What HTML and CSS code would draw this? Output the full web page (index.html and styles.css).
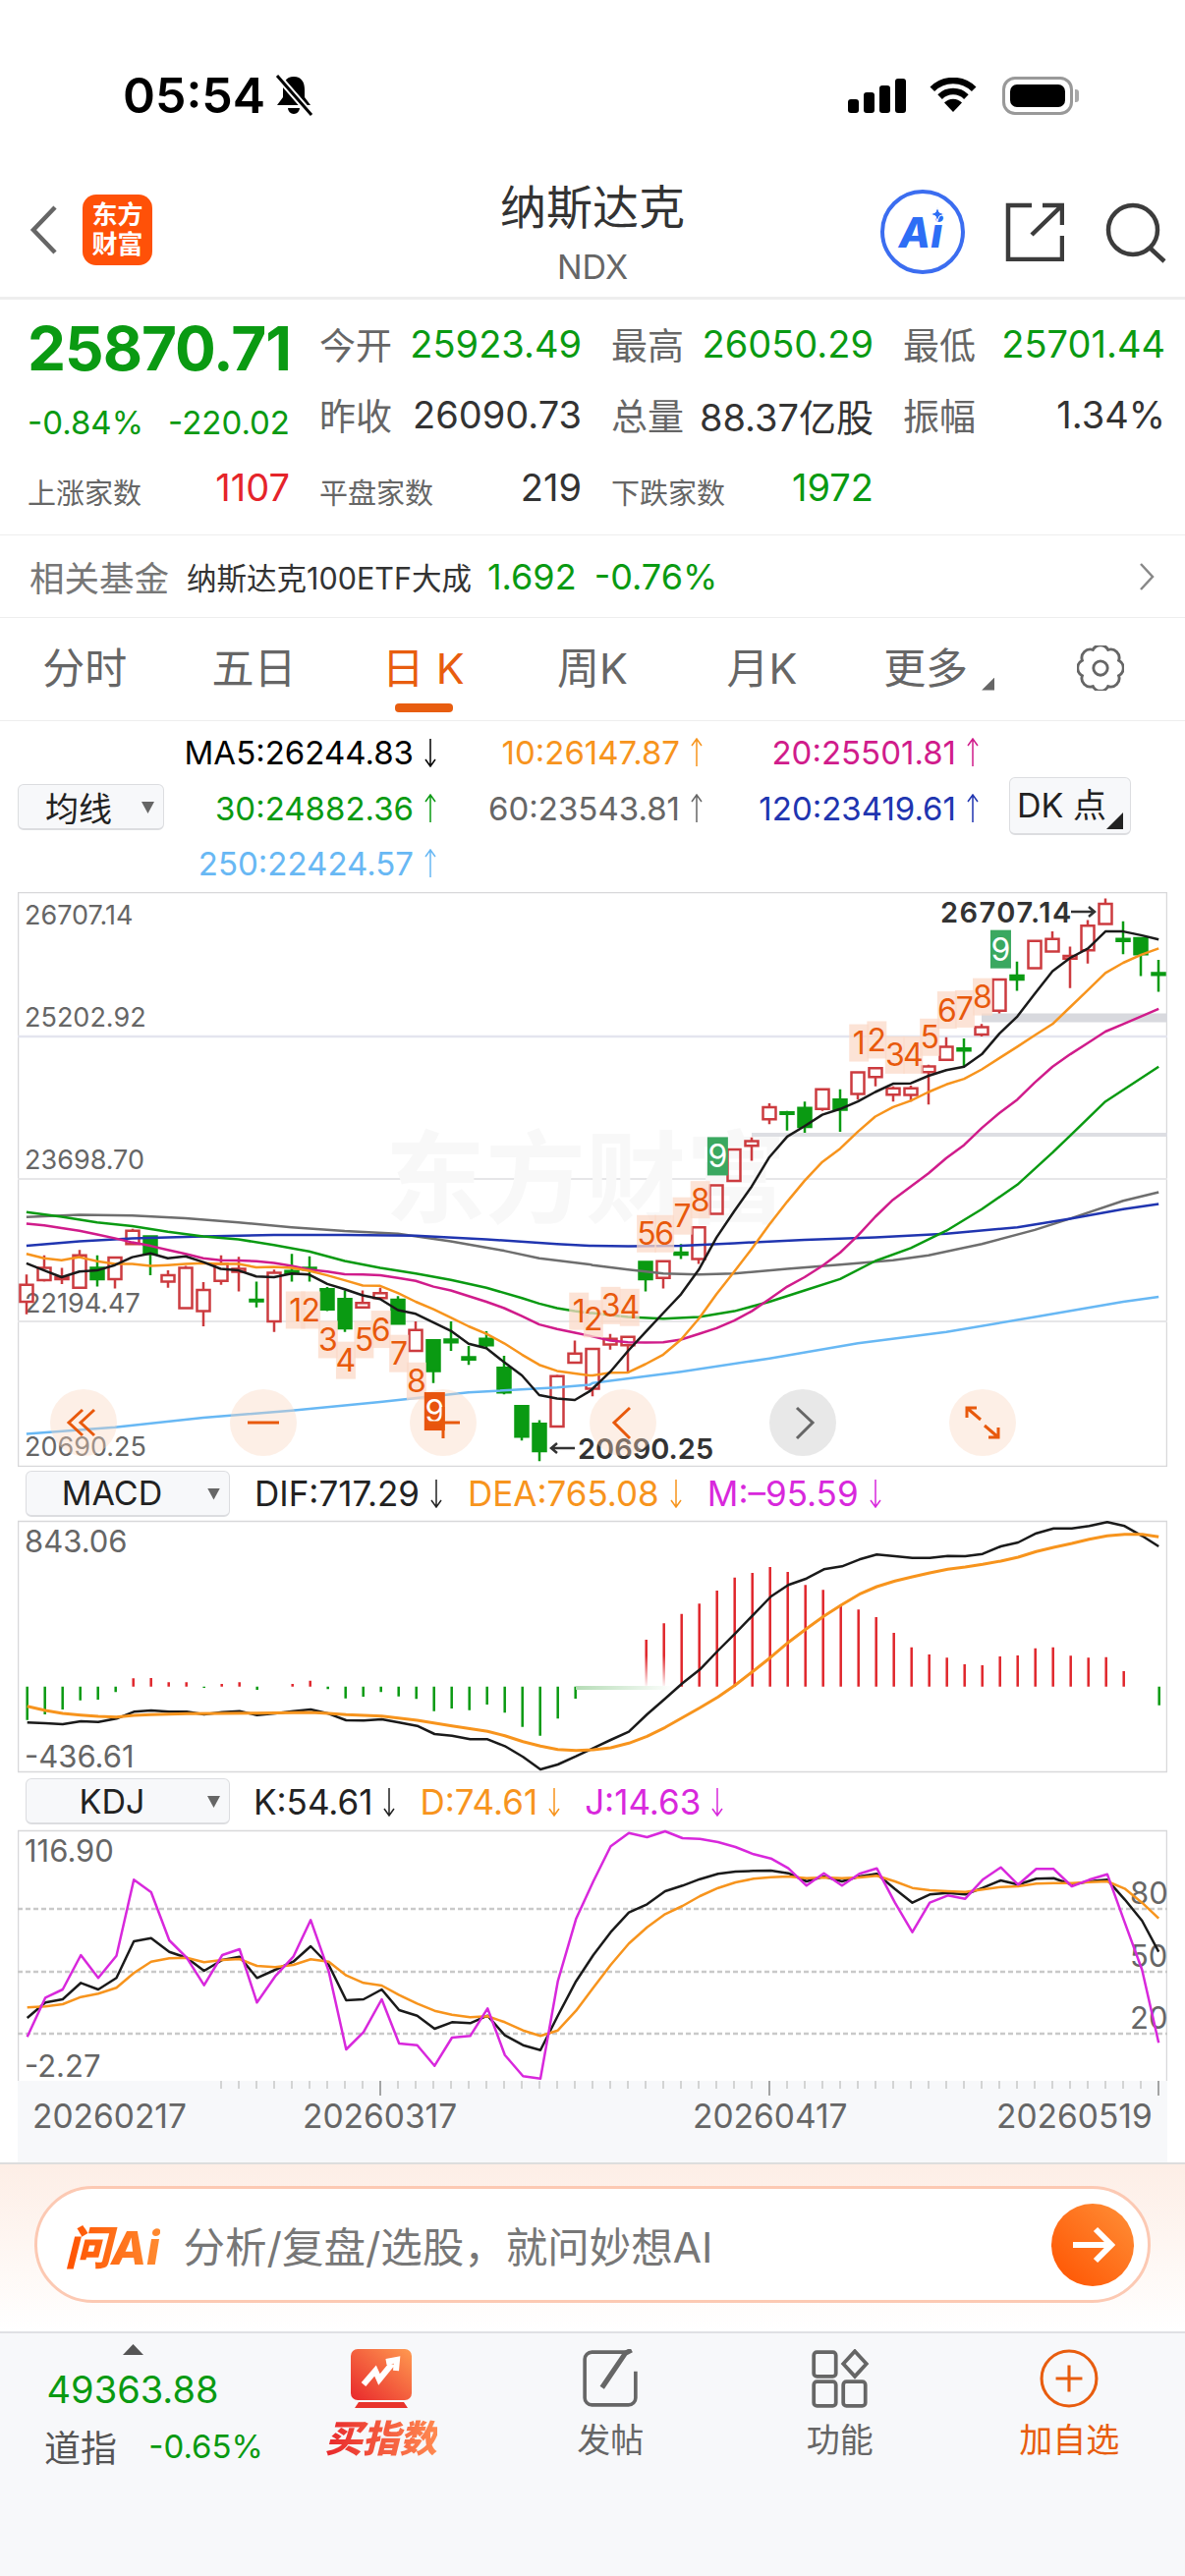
FILE: index.html
```html
<!DOCTYPE html>
<html lang="zh-CN">
<head>
  <meta charset="UTF-8">
  <meta name="viewport" content="width=device-width, initial-scale=1.0">
  <title>纳斯达克 NDX</title>
  <link rel="stylesheet" href="styles.css">
</head>
<body>

  <svg class="defs" aria-hidden="true">
    <symbol id="arr-down" viewBox="0 0 14 30"><path d="M7 1V29M2 22L7 29L12 22"/></symbol>
    <symbol id="arr-up" viewBox="0 0 14 30"><path d="M7 29V1M2 8L7 1L12 8"/></symbol>
    <linearGradient id="buy-grad" x1="0" y1="1" x2="1" y2="0">
      <stop offset="0" stop-color="#e8282c"/><stop offset="1" stop-color="#ff9a50"/>
    </linearGradient>
    <linearGradient id="go-grad" x1="0" y1="1" x2="1" y2="0">
      <stop offset="0" stop-color="#ff5200"/><stop offset="1" stop-color="#ff9038"/>
    </linearGradient>
    <linearGradient id="smear-grad" x1="0" y1="0" x2="1" y2="0">
      <stop offset="0" stop-color="#b5dcb6"/><stop offset="1" stop-color="#fff"/>
    </linearGradient>
    <linearGradient id="fade-grad" x1="0" y1="0" x2="0" y2="1">
      <stop offset="0" stop-color="#fff" stop-opacity="0"/><stop offset="1" stop-color="#fff"/>
    </linearGradient>
  </svg>

  <!-- status bar -->
  <div class="status">
    <div class="status-left">
      <span class="time">05:54</span>
      <svg class="bell" viewBox="0 0 40 42">
        <path d="M20 2c-8 0-11 6-11 13v8l-6 8h34l-6-8v-8c0-7-3-13-11-13zM14 34a6 6 0 0 0 12 0z"/>
        <path class="bell-cut" d="M4 2L37 40"/>
        <path class="bell-slash" d="M3 1L38 41"/>
      </svg>
    </div>
    <div class="status-right">
      <div class="signal"><i class="s1"></i><i class="s2"></i><i class="s3"></i><i class="s4"></i></div>
      <svg class="wifi" viewBox="0 0 50 36">
        <path class="wifi-arc" d="M3.8 11.8A30 30 0 0 1 46.2 11.8M11.6 19.6A19 19 0 0 1 38.4 19.6"/>
        <path d="M25 35L16 25.500a12.500 12.500 0 0 1 18 0z"/>
      </svg>
      <div class="battery"><i></i></div>
      <i class="battery-cap"></i>
    </div>
  </div>

  <!-- title -->
  <header class="head">
    <div class="head-left">
      <svg class="back" viewBox="0 0 30 52"><path d="M26 3L4 26L26 49"/></svg>
      <div class="logo"><span>东方</span><span>财富</span></div>
    </div>
    <div class="head-title">
      <div class="name">纳斯达克</div>
      <div class="code">NDX</div>
    </div>
    <div class="head-right">
      <svg class="ai" viewBox="0 0 88 88">
        <circle cx="44" cy="44" r="41"/>
        <text x="42" y="60">Ai</text>
        <path d="M59 19l2 5 5 2-5 2-2 5-2-5-5-2 5-2z"/>
      </svg>
      <svg class="tool share" viewBox="0 0 60 60"><path d="M27 3H3V58H58V34M27 33L58 3M38 3H58V23"/></svg>
      <svg class="tool search" viewBox="0 0 64 64"><circle cx="28" cy="30" r="25"/><path d="M46 49L60 62"/></svg>
    </div>
  </header>

  <!-- quote -->
  <section class="quote">
    <div class="q-price green">25870.71</div>
    <div class="q-cell"><span class="q-label">今开</span><span class="q-val green">25923.49</span></div>
    <div class="q-cell"><span class="q-label">最高</span><span class="q-val green">26050.29</span></div>
    <div class="q-cell"><span class="q-label">最低</span><span class="q-val green">25701.44</span></div>

    <div class="q-cell q-change green"><span>-0.84%</span><span>-220.02</span></div>
    <div class="q-cell"><span class="q-label">昨收</span><span class="q-val">26090.73</span></div>
    <div class="q-cell"><span class="q-label">总量</span><span class="q-val">88.37亿股</span></div>
    <div class="q-cell"><span class="q-label">振幅</span><span class="q-val">1.34%</span></div>

    <div class="q-cell q-count"><span class="q-small">上涨家数</span><span class="q-val red">1107</span></div>
    <div class="q-cell q-count"><span class="q-small">平盘家数</span><span class="q-val">219</span></div>
    <div class="q-cell q-count"><span class="q-small">下跌家数</span><span class="q-val green">1972</span></div>
  </section>

  <div class="fund">
    <span class="fund-label">相关基金</span>
    <span class="fund-name">纳斯达克100ETF大成</span>
    <span class="fund-val green">1.692</span>
    <span class="fund-val fund-pct green">-0.76%</span>
    <svg class="fund-more" viewBox="0 0 16 30"><path d="M2 2L14 15L2 28"/></svg>
  </div>

  <!-- period tabs -->
  <nav class="tabs">
    <div class="tab">分时</div>
    <div class="tab">五日</div>
    <div class="tab on">日 K</div>
    <div class="tab">周K</div>
    <div class="tab">月K</div>
    <div class="tab">更多<i class="tab-corner"></i></div>
    <div class="tab">
      <svg class="gear" viewBox="0 0 48 48">
        <path d="M32 4.600A9 9 0 0 1 43.400 16A9 9 0 0 1 43.400 32A9 9 0 0 1 32 43.400A9 9 0 0 1 16 43.400A9 9 0 0 1 4.600 32A9 9 0 0 1 4.600 16A9 9 0 0 1 16 4.600A9 9 0 0 1 32 4.600Z"/>
        <circle cx="24" cy="24" r="7.500"/>
      </svg>
    </div>
  </nav>

  <!-- moving averages legend -->
  <div class="legend">
    <div class="pick pick-ma">均线<i class="pick-tri"></i></div>
    <div class="ma-grid">
      <span class="ma c-black">MA5:26244.83<svg class="arr"><use href="#arr-down"/></svg></span>
      <span class="ma c-orange">10:26147.87<svg class="arr"><use href="#arr-up"/></svg></span>
      <span class="ma c-pink">20:25501.81<svg class="arr"><use href="#arr-up"/></svg></span>
      <span class="ma c-green">30:24882.36<svg class="arr"><use href="#arr-up"/></svg></span>
      <span class="ma c-gray">60:23543.81<svg class="arr"><use href="#arr-up"/></svg></span>
      <span class="ma c-blue">120:23419.61<svg class="arr"><use href="#arr-up"/></svg></span>
      <span class="ma c-sky">250:22424.57<svg class="arr"><use href="#arr-up"/></svg></span>
    </div>
    <div class="dk">DK 点<i class="dk-corner"></i></div>
  </div>

  <!-- candle chart, drawn in page coordinates -->
  <svg class="plot plot-main" viewBox="18 908 1170 585">
    <rect class="frame" x="18.500" y="908.500" width="1169" height="584"/>
    <path class="grid-a" d="M18 1055H1188"/>
    <path class="grid-b" d="M18 1200H1188M18 1345H1188"/>
    <path class="grid-c" d="M999 1036H1188"/>
    <path class="grid-d" d="M765 1155H1188"/>
    <text class="wm" x="392" y="1200">东方财富</text>
    <text class="axis" x="25" y="931">26707.14</text>
    <text class="axis" x="25" y="1035">25202.92</text>
    <text class="axis" x="25" y="1180">23698.70</text>
    <text class="axis" x="25" y="1326">22194.47</text>
    <text class="axis" x="25" y="1472">20690.25</text>
    <g id="candles"></g>
    <g id="ma-lines"></g>
    <g id="td-marks"></g>
    <text class="peak peak-top" x="957" y="928">26707.14</text>
    <path class="peak-arrow" d="M1090 928H1114M1108 923L1114 928L1108 933"/>
    <path class="peak-arrow" d="M585 1474H561M567 1469L561 1474L567 1479"/>
    <text class="peak" x="588" y="1474">20690.25</text>
    <g class="pad">
      <circle cx="85" cy="1448" r="34"/><circle cx="268" cy="1448" r="34"/><circle cx="451" cy="1448" r="34"/>
      <circle cx="634" cy="1448" r="34"/><circle cx="1000" cy="1448" r="34"/>
      <circle class="pad-off" cx="817" cy="1448" r="34"/>
    </g>
    <g id="td-top"></g>
    <g class="pad">
      <path d="M84 1435L70 1448L84 1461M96 1435L82 1448L96 1461"/>
      <path d="M252 1448H284"/>
      <path d="M435 1448H468M451 1432V1464"/>
      <path d="M641 1433L625 1448L641 1464"/>
      <path class="pad-dark" d="M811 1433L827 1448L811 1464"/>
      <path d="M984 1433L998 1445M984 1443V1433H994M1016 1463L1002 1451M1016 1453V1463H1006"/>
    </g>
  </svg>

  <div class="sub-row">
    <div class="pick pick-sub">MACD<i class="pick-tri"></i></div>
    <span class="ma c-dark">DIF:717.29<svg class="arr"><use href="#arr-down"/></svg></span>
    <span class="ma c-orange">DEA:765.08<svg class="arr"><use href="#arr-down"/></svg></span>
    <span class="ma c-violet">M:–95.59<svg class="arr"><use href="#arr-down"/></svg></span>
  </div>
  <svg class="plot plot-macd" viewBox="18 1547 1170 258">
    <rect class="frame" x="18.500" y="1548.500" width="1169" height="255"/>
    <text class="axis axis-big" x="25" y="1568">843.06</text>
    <text class="axis axis-big" x="25" y="1787">-436.61</text>
    <g id="macd-bars"></g>
    <rect x="652" y="1685" width="34" height="33" fill="url(#fade-grad)"/>
    <rect x="586" y="1716" width="100" height="4" fill="url(#smear-grad)"/>
    <g id="macd-lines"></g>
  </svg>

  <div class="sub-row sub-kdj">
    <div class="pick pick-sub">KDJ<i class="pick-tri"></i></div>
    <span class="ma c-dark">K:54.61<svg class="arr"><use href="#arr-down"/></svg></span>
    <span class="ma c-orange">D:74.61<svg class="arr"><use href="#arr-down"/></svg></span>
    <span class="ma c-violet">J:14.63<svg class="arr"><use href="#arr-down"/></svg></span>
  </div>
  <svg class="plot plot-kdj" viewBox="18 1862 1170 339">
    <rect class="strip" x="18" y="2118" width="1170" height="83"/>
    <path class="frame-open" d="M18.500 2118V1863.500H1187.500V2118"/>
    <path class="dash" d="M18 1943H1188M18 2007H1188M18 2070H1188"/>
    <text class="axis axis-big" x="25" y="1883">116.90</text>
    <text class="axis axis-big" x="25" y="2102">-2.27</text>
    <text class="axis axis-big" x="1150" y="1926">80</text>
    <text class="axis axis-big" x="1150" y="1990">50</text>
    <text class="axis axis-big" x="1150" y="2053">20</text>
    <g id="kdj-lines"></g>
    <g id="kdj-ticks"></g>
    <text class="date" x="33" y="2154">20260217</text>
    <text class="date" x="308" y="2154">20260317</text>
    <text class="date" x="705" y="2154">20260417</text>
    <text class="date" x="1014" y="2154">20260519</text>
  </svg>

  <!-- ask AI bar -->
  <div class="ask">
    <div class="ask-pill">
      <span class="ask-logo">问Ai</span>
      <span class="ask-text">分析/复盘/选股，就问妙想AI</span>
      <svg class="ask-go" viewBox="0 0 84 84">
        <circle cx="42" cy="42" r="42"/>
        <path d="M22 42H60M45 26L61 42L45 58"/>
      </svg>
    </div>
  </div>

  <!-- bottom bar -->
  <footer class="bar">
    <div class="bar-index">
      <i class="up-tri"></i>
      <div class="idx-num green">49363.88</div>
      <div class="idx-row"><span class="idx-name">道指</span><span class="idx-pct green">-0.65%</span></div>
    </div>
    <div class="bar-item">
      <svg class="bar-icon" viewBox="0 0 62 60">
        <rect width="62" height="52" rx="7" fill="url(#buy-grad)"/>
        <path d="M8 54H54L58 60H4Z" fill="#e8342c"/>
        <path class="buy-mark" d="M13 36L25 22L29 31L42 15M36 13L47 11L46 22"/>
      </svg>
      <span class="bar-label bar-buy">买指数</span>
    </div>
    <div class="bar-item">
      <svg class="bar-icon bar-line" viewBox="0 0 56 58">
        <path d="M44 3H10a7 7 0 0 0-7 7V48a7 7 0 0 0 7 7H46a7 7 0 0 0 7-7V22"/>
        <path d="M20 38L43 4L49 1" class="pen"/>
      </svg>
      <span class="bar-label">发帖</span>
    </div>
    <div class="bar-item">
      <svg class="bar-icon bar-line" viewBox="0 0 56 56">
        <rect x="3" y="3" width="21" height="23" rx="3"/>
        <rect x="3" y="31" width="21" height="23" rx="3"/>
        <rect x="31" y="31" width="21" height="23" rx="3"/>
        <path d="M42 2L53 14L42 26L31 14Z"/>
      </svg>
      <span class="bar-label">功能</span>
    </div>
    <div class="bar-item">
      <svg class="bar-icon bar-add" viewBox="0 0 58 58">
        <circle cx="29" cy="29" r="27"/>
        <path d="M16 29H42M29 16V42"/>
      </svg>
      <span class="bar-label c-active">加自选</span>
    </div>
  </footer>

  <script src="chart.js"></script>
</body>
</html>
```

FILE: styles.css
```css
* { box-sizing: border-box; }

html, body { margin: 0; padding: 0; }

body {
  width: 1206px;
  height: 2622px;
  overflow: hidden;
  background: #fff;
  color: #333;
  font-family: Inter, "Noto Sans CJK SC", sans-serif;
}

i { display: block; font-style: normal; }

.defs { width: 0; height: 0; position: absolute; }

.green { color: #0a9a12; }
.red { color: #e5242a; }
.c-black { color: #000; }
.c-dark { color: #222; }
.c-orange { color: #f7941d; }
.c-pink { color: #d01c8b; }
.c-green { color: #0a9a12; }
.c-gray { color: #666; }
.c-blue { color: #2035b0; }
.c-sky { color: #68b8f4; }
.c-violet { color: #d828dc; }
.c-active { color: #e85d0f; }

/* status bar */
.status {
  height: 175px;
  padding: 72px 108px 0 125px;
  display: flex;
  justify-content: space-between;
  align-items: flex-start;
}
.status-left, .status-right { height: 50px; display: flex; align-items: center; }
.time { font-size: 50px; font-weight: 600; color: #000; line-height: 50px; }
.bell { width: 40px; height: 42px; margin-left: 9px; }
.bell-cut { stroke: #fff; stroke-width: 7; fill: none; }
.bell-slash { stroke: #000; stroke-width: 3; fill: none; }
.signal { display: flex; align-items: flex-end; gap: 5px; height: 35px; }
.signal i { width: 11px; background: #000; border-radius: 3px; }
.s1 { height: 14px; }
.s2 { height: 21px; }
.s3 { height: 28px; }
.s4 { height: 35px; }
.wifi { width: 50px; height: 36px; margin-left: 23px; }
.wifi-arc { fill: none; stroke: #000; stroke-width: 6.500; }
.battery {
  width: 72px;
  height: 39px;
  margin-left: 25px;
  padding: 5px;
  border: 3px solid #999;
  border-radius: 13px;
}
.battery i { height: 100%; background: #000; border-radius: 7px; }
.battery-cap { width: 4px; height: 13px; margin-left: 2px; background: #aaa; border-radius: 0 3px 3px 0; }

/* title */
.head {
  height: 130px;
  border-bottom: 3px solid #eee;
  display: grid;
  grid-template-columns: 1fr auto 1fr;
  align-items: start;
}
.head-left { display: flex; align-items: center; padding: 23px 0 0 30px; }
.back { width: 30px; height: 52px; fill: none; stroke: #666; stroke-width: 4.500; }
.logo {
  width: 71px;
  height: 72px;
  margin-left: 24px;
  background: #ff5108;
  border-radius: 14px;
  color: #fff;
  font-size: 26px;
  font-weight: 700;
  line-height: 30px;
  padding-top: 6px;
  text-align: center;
}
.logo span { display: block; }
.head-title { padding-top: 6px; text-align: center; }
.name { font-size: 47px; line-height: 60px; color: #333; }
.code { font-size: 34px; line-height: 61px; color: #666; }
.head-right { display: flex; align-items: center; justify-content: flex-end; padding: 17px 17px 0 0; }
.ai { width: 88px; height: 88px; }
.ai circle { fill: none; stroke: #3b6df0; stroke-width: 4; }
.ai text { fill: #2d6ef5; font-size: 42px; font-weight: 800; font-style: italic; text-anchor: middle; }
.ai path { fill: #2d6ef5; stroke: #fff; stroke-width: 1; }
.tool { fill: none; stroke: #3c3c3c; stroke-width: 4.500; }
.share { width: 60px; height: 60px; margin-left: 40px; }
.search { width: 64px; height: 64px; margin-left: 42px; }

/* quote */
.quote {
  height: 240px;
  padding: 9px 20px 0 28px;
  border-bottom: 1px solid #eee;
  display: grid;
  grid-template-columns: 267px 267px 267px 267px;
  grid-template-rows: 72px 72px 76px;
  column-gap: 30px;
  align-items: center;
}
.q-price { font-size: 62px; font-weight: 700; letter-spacing: -1px; padding: 8px 0 0 0; white-space: nowrap; }
.q-cell { display: flex; justify-content: space-between; align-items: center; }
.q-label { font-size: 37px; color: #666; }
.q-val { font-size: 38px; }
.q-change { font-size: 33px; padding-top: 16px; }
.q-small { font-size: 29px; color: #666; padding-top: 8px; }

.fund {
  height: 84px;
  padding: 0 31px 0 30px;
  border-bottom: 1px solid #eee;
  display: flex;
  align-items: center;
}
.fund-label { font-size: 35.500px; color: #777; }
.fund-name { font-size: 30.500px; color: #333; margin-left: 18px; }
.fund-val { font-size: 36px; margin-left: 16px; }
.fund-pct { margin-left: 18px; }
.fund-more { width: 16px; height: 30px; margin-left: auto; fill: none; stroke: #888; stroke-width: 2.500; }

/* tabs */
.tabs {
  height: 105px;
  padding-top: 21px;
  border-bottom: 1px solid #eee;
  display: grid;
  grid-template-columns: repeat(7, 172.300px);
}
.tab {
  height: 60px;
  font-size: 43px;
  line-height: 60px;
  color: #666;
  display: flex;
  justify-content: center;
  align-items: center;
}
.tab.on { color: #e85d0f; position: relative; }
.tab.on::after {
  content: "";
  position: absolute;
  left: 57px;
  top: 66px;
  width: 59px;
  height: 9px;
  background: #e85d0f;
  border-radius: 4px;
}
.tab-corner {
  width: 13px;
  height: 13px;
  margin: 32px -16px 0 14px;
  background: #666;
  clip-path: polygon(100% 0, 100% 100%, 0 100%);
}
.gear { width: 48px; height: 46px; fill: none; stroke: #666; stroke-width: 3; }

/* legend */
.legend {
  height: 174px;
  padding: 3px 0 0 18px;
  display: flex;
  align-items: center;
}
.pick {
  position: relative;
  background: #f7f8fa;
  border: 1px solid #dcdde0;
  border-bottom-width: 2px;
  border-radius: 6px;
  color: #222;
  font-size: 34px;
  display: flex;
  align-items: center;
}
.pick-ma { width: 149px; height: 47px; padding-left: 27px; margin-top: -2px; }
.pick-sub { width: 208px; height: 47px; padding-right: 32px; margin-left: 26px; justify-content: center; }
.pick-tri {
  position: absolute;
  right: 9px;
  top: 17px;
  width: 13px;
  height: 12px;
  background: #666;
  clip-path: polygon(0 0, 100% 0, 50% 100%);
}
.ma-grid {
  width: 830px;
  display: grid;
  grid-template-columns: 278px 271px 281px;
  grid-auto-rows: 56.500px;
}
.ma {
  font-size: 33px;
  display: inline-flex;
  align-items: center;
  justify-content: flex-end;
}
.arr { width: 14px; height: 30px; margin-left: 10px; fill: none; stroke: currentColor; stroke-width: 1.500; }
.dk {
  position: relative;
  width: 124px;
  height: 59px;
  margin-left: 30px;
  margin-top: -4px;
  background: #f7f8fa;
  border: 1px solid #dcdde0;
  border-bottom-width: 2px;
  border-radius: 6px;
  font-size: 34px;
  color: #222;
  padding-left: 7px;
  line-height: 56px;
  white-space: nowrap;
}
.dk-corner {
  position: absolute;
  right: 7px;
  bottom: 4px;
  width: 17px;
  height: 17px;
  background: #222;
  clip-path: polygon(100% 0, 100% 100%, 0 100%);
}

/* charts */
.plot { display: block; width: 1170px; margin-left: 18px; }
.plot-main { height: 585px; }
.plot-macd { height: 258px; }
.plot-kdj { height: 339px; }
.frame { fill: none; stroke: #d8d8da; stroke-width: 1.500; }
.frame-open { fill: none; stroke: #d8d8da; stroke-width: 1.500; }
.strip { fill: #f7f8fa; }
.grid-a { stroke: #e4e5ef; stroke-width: 2.500; }
.grid-b { stroke: #e6e6e8; stroke-width: 2; }
.grid-c { stroke: #d8d9de; stroke-width: 9; }
.grid-d { stroke: #dddee3; stroke-width: 4; }
.wm { font-size: 102px; font-weight: 700; fill: #f8f8f8; dominant-baseline: central; }
.axis { font-size: 27px; fill: #666; dominant-baseline: central; }
.axis-big { font-size: 31px; }
.date { font-size: 33.500px; fill: #666; dominant-baseline: central; }
.peak { font-size: 29px; font-weight: 600; fill: #333; dominant-baseline: central; }
.peak-top { letter-spacing: 1.500px; }
.peak-arrow { fill: none; stroke: #333; stroke-width: 2.500; }
.candle-up { fill: none; stroke: #cc3b3f; stroke-width: 2.500; }
.candle-down { fill: #0a9a12; stroke: #0a9a12; stroke-width: 2.500; }
.line { fill: none; stroke-width: 2.500; stroke-linejoin: round; }
.line-wide { stroke-width: 3; }
.l-black { stroke: #1a1a1a; }
.l-orange { stroke: #f7941d; }
.l-pink { stroke: #d01c8b; }
.l-green { stroke: #0a9a12; }
.l-gray { stroke: #6e6e6e; }
.l-blue { stroke: #2035b0; }
.l-sky { stroke: #68b8f4; }
.l-violet { stroke: #d828dc; }
.td-box { fill: #fbd9c8; opacity: .75; }
.td-num { font-size: 32px; fill: #e8590c; text-anchor: middle; dominant-baseline: central; }
.td-box-red { fill: #e8540e; }
.td-box-green { fill: #3aa860; }
.td-num-white { fill: #fff; }
.pad circle { fill: #fbd4bc; opacity: .38; }
.pad circle.pad-off { fill: #e2e2e2; opacity: .8; }
.pad path { fill: none; stroke: #e8590c; stroke-width: 3; }
.pad path.pad-dark { stroke: #666; }
.bar-red { stroke: #e0262c; stroke-width: 2.500; }
.bar-green { stroke: #0a9a12; stroke-width: 2.500; }
.dash { fill: none; stroke: #c9c9c9; stroke-width: 2.500; stroke-dasharray: 5 3; }
.tick { stroke: #c8c8c8; stroke-width: 1.500; }
.tick-major { stroke: #888; stroke-width: 1.500; }

.sub-row { height: 54px; display: flex; align-items: center; gap: 25px; }
.sub-row .ma { font-size: 35px; }
.sub-kdj { height: 57px; gap: 24px; }

/* ask AI */
.ask {
  height: 172px;
  padding: 22px 35px 0;
  border-top: 2px solid #ddd;
  background: linear-gradient(#fdeee6, #fff);
}
.ask-pill {
  height: 119px;
  padding: 0 14px 0 28px;
  background: #fff;
  border: 3px solid #fcc9b3;
  border-radius: 60px;
  display: flex;
  align-items: center;
}
.ask-logo {
  font-size: 47px;
  font-weight: 800;
  font-style: italic;
  color: #ff5a0a;
  background: linear-gradient(90deg, #ff5200, #ff8a30);
  -webkit-background-clip: text;
  background-clip: text;
  -webkit-text-fill-color: transparent;
}
.ask-text { font-size: 42.500px; color: #777; margin-left: 24px; }
.ask-go { width: 84px; height: 84px; margin-left: auto; }
.ask-go circle { fill: url(#go-grad); }
.ask-go path { fill: none; stroke: #fff; stroke-width: 6; }

/* bottom bar */
.bar {
  height: 249px;
  padding-left: 45px;
  background: #f7f8fa;
  border-top: 2px solid #dfe0e4;
  display: grid;
  grid-template-columns: 226px repeat(4, 233.500px);
  align-items: start;
}
.bar-index { padding-top: 11px; }
.up-tri {
  width: 21px;
  height: 11px;
  margin-left: 80px;
  background: #555;
  clip-path: polygon(50% 0, 100% 100%, 0 100%);
}
.idx-num { width: 180px; font-size: 38px; line-height: 50px; margin-top: 10px; text-align: center; }
.idx-row { display: flex; align-items: center; justify-content: space-between; width: 223px; margin-top: 6px; }
.idx-name { font-size: 37px; color: #555; }
.idx-pct { font-size: 33px; }
.bar-item { padding-top: 16px; display: flex; flex-direction: column; align-items: center; }
.bar-icon { width: 62px; height: 60px; }
.buy-mark { fill: none; stroke: #fff; stroke-width: 6; }
.bar-line { fill: none; stroke: #666; stroke-width: 3.500; }
.pen { stroke-width: 5; }
.bar-add { fill: none; stroke: #e85d0f; stroke-width: 3; }
.bar-label { font-size: 34px; line-height: 50px; margin-top: 8px; color: #666; }
.bar-label.c-active { color: #e85d0f; }
.bar-buy {
  font-size: 38px;
  font-weight: 900;
  font-style: italic;
  margin-top: 6px;
  color: #e8342c;
  background: linear-gradient(90deg, #e8282c, #ff8a50);
  -webkit-background-clip: text;
  background-clip: text;
  -webkit-text-fill-color: transparent;
}
```

FILE: chart.js
```js
// all coordinates below are read off the chart: main panel in 2.6x units, sub panels in 1.3x / 3x units
var STEP = 18;
var FIRST = 27;

var mainX = function (x) { return x / 2.6; };
var mainY = function (y) { return 900 + y / 2.6; };

var poly = function (str, fx, fy, shift) {
  return str.trim().split(/\s+/).map(function (p) {
    var a = p.split(',');
    return fx(Number(a[0]) + (shift || 0)).toFixed(1) + ' ' + fy(Number(a[1])).toFixed(1);
  }).join(' L');
};

var linePath = function (cls, d) {
  return '<path class="line ' + cls + '" d="M' + d + '"/>';
};

// high, body top, body bottom, low, d = green
var candles = [
  [1033,1060,1105,1138],[982,1015,1048,1052],[1015,1040,1045,1058],[968,982,1068,1070],[982,1015,1045,1065,'d'],
  [985,988,1045,1070],[912,917,952,955],[930,932,978,1035,'d'],[1022,1035,1052,1068],[1010,1015,1122,1124],
  [1053,1074,1130,1170],[982,1005,1050,1060],[986,1018,1026,1078],[1052,1100,1104,1120,'d'],[1020,1028,1157,1185],
  [978,1024,1030,1052,'d'],[985,1015,1020,1052,'d'],[1066,1072,1125,1130,'d'],[1075,1098,1175,1185,'d'],[1075,1108,1120,1122],
  [1068,1082,1095,1100],[1090,1100,1163,1165,'d'],[1157,1180,1235,1238],[1205,1207,1288,1320,'d'],[1157,1205,1212,1235,'d'],
  [1222,1252,1258,1272,'d'],[1183,1203,1220,1228,'d'],[1248,1280,1345,1350,'d'],[1378,1381,1462,1472,'d'],[1418,1428,1500,1527,'d'],
  [1298,1302,1435,1437],[1208,1242,1266,1268],[1228,1230,1335,1355],[1190,1203,1218,1232],[1195,1198,1220,1295],
  [998,1000,1045,1078,'d'],[995,998,1042,1070],[952,975,980,992,'d'],[905,908,992,1005],[795,797,872,875],
  [700,702,785,787],[670,680,692,732],[580,590,622,635],[600,604,608,652,'d'],[575,592,642,658,'d'],
  [540,543,595,600],[543,570,597,655,'d'],[495,498,555,570],[485,487,510,535],[535,540,557,575],
  [533,540,558,575],[478,482,497,583],[405,430,465,467],[408,435,440,482,'d'],[370,378,398,403],
  [250,252,335,342],[205,242,252,282,'d'],[148,150,222,224],[125,145,178,180],[165,190,197,275],
  [95,110,175,210],[38,52,105,107],[98,145,150,185,'d'],[142,143,185,243,'d'],[200,235,240,285,'d']
];

var drawCandles = function () {
  var up = '', down = '';
  candles.forEach(function (c, i) {
    var x = FIRST + STEP * i;
    var hi = mainY(c[0]).toFixed(1), top = mainY(c[1]).toFixed(1);
    var bot = mainY(c[2]).toFixed(1), lo = mainY(c[3]).toFixed(1);
    var d = 'M' + x + ' ' + hi + 'V' + top + 'M' + x + ' ' + bot + 'V' + lo +
      'M' + (x - 6.5) + ' ' + top + 'H' + (x + 6.5) + 'V' + bot + 'H' + (x - 6.5) + 'Z';
    if (c[4]) down += d; else up += d;
  });
  document.getElementById('candles').innerHTML =
    '<path class="candle-up" d="' + up + '"/><path class="candle-down" d="' + down + '"/>';
};

// [left half of the panel, right half]
var maLines = [
  ['l-sky', '70,1455 304,1437 538,1412 772,1393 1006,1370 1240,1345 1474,1332 1560,1325',
    '0,1320 234,1290 468,1255 702,1215 936,1185 1170,1145 1404,1105 1498,1092'],
  ['l-gray', '70,881 210,875 350,877 491,884 631,895 772,908 912,918 1053,925 1193,945 1334,970 1427,990 1560,1006',
    '0,1008 94,1020 187,1030 281,1033 375,1030 515,1018 655,1007 795,995 889,982 1030,952 1170,915 1264,885 1404,838 1498,815'],
  ['l-blue', '70,957 210,945 350,937 538,932 725,928 912,928 1100,930 1287,940 1474,952 1560,957',
    '0,957 94,958 234,957 375,950 561,941 748,935 936,925 1124,908 1264,885 1404,860 1498,846'],
  ['l-green', '70,868 163,880 257,895 350,905 444,920 538,932 631,940 725,955 818,972 912,997 1006,1015 1100,1030 1193,1047 1287,1068 1381,1095 1427,1110 1474,1122 1521,1130 1560,1135',
    '0,1135 94,1145 187,1150 281,1145 375,1130 468,1105 561,1075 655,1045 748,997 842,963 936,917 1030,860 1124,795 1217,710 1264,665 1357,575 1498,483'],
  ['l-pink', '70,898 117,903 163,910 210,917 257,927 304,937 350,948 398,957 444,968 491,978 538,990 584,995 631,996 678,998 725,1002 772,1010 818,1020 866,1025 912,1032 960,1033 1006,1035 1053,1042 1100,1050 1147,1065 1193,1075 1240,1090 1287,1105 1334,1122 1381,1143 1427,1165 1474,1177 1521,1187 1560,1195',
    '0,1197 47,1208 94,1212 140,1213 187,1212 234,1205 281,1190 328,1175 375,1155 421,1130 468,1098 515,1065 561,1040 608,1010 655,975 702,930 748,880 795,835 842,800 889,765 936,725 983,690 1030,645 1077,605 1124,570 1170,525 1217,483 1264,450 1311,420 1357,390 1404,370 1451,350 1498,330'],
  ['l-orange', '70,978 117,990 163,995 210,987 257,998 304,1005 350,1005 398,1010 444,1008 491,1005 538,1003 584,1005 631,1005 678,1014 725,1013 772,1015 818,1023 866,1035 912,1048 960,1062 1006,1063 1053,1082 1100,1105 1147,1125 1193,1147 1240,1170 1287,1190 1334,1215 1381,1245 1427,1272 1474,1288 1521,1295 1560,1300',
    '0,1300 47,1293 94,1292 140,1270 187,1245 234,1205 281,1150 328,1085 375,1025 421,965 468,900 515,840 561,785 608,735 655,700 702,655 748,615 795,590 842,573 889,550 936,530 983,515 1030,490 1077,460 1124,430 1170,400 1217,370 1264,325 1311,280 1357,235 1404,208 1451,187 1498,170'],
  ['l-black', '70,1003 117,1022 163,1040 210,1025 257,1022 304,1008 350,987 398,977 444,990 491,985 538,1000 584,1018 631,1022 678,1038 725,1040 772,1030 818,1033 866,1058 912,1072 960,1088 1006,1098 1053,1127 1100,1137 1147,1160 1193,1182 1240,1216 1287,1228 1334,1265 1381,1300 1427,1352 1474,1361 1521,1365 1560,1342',
    '0,1335 47,1290 94,1235 140,1185 187,1135 234,1085 281,1020 328,935 375,865 421,800 468,722 515,668 561,640 608,610 655,595 702,575 748,550 795,528 842,527 889,507 936,492 983,483 1030,450 1077,395 1124,350 1170,290 1217,230 1264,195 1311,170 1357,125 1404,125 1451,135 1498,146']
];

var drawMa = function () {
  document.getElementById('ma-lines').innerHTML = maLines.map(function (l) {
    return linePath(l[0], poly(l[1], mainX, mainY) + ' L' + poly(l[2], mainX, mainY, 1568));
  }).join('');
};

// label, x, y in 2.6x units
var tdMarks = [
  ['1',782,1127],['2',822,1127],['3',868,1205],['4',915,1260],['5',963,1205],['6',1008,1178],['7',1056,1242],['8',1102,1315],
  ['1',1532,1130],['2',1570,1150],['3',1616,1115],['4',1666,1120],
  ['5',1711,925],['6',1758,925],['7',1806,878],['8',1853,835],
  ['1',2273,420],['2',2320,412],['3',2368,452],['4',2416,452],['5',2460,405],['6',2506,333],['7',2553,330],['8',2600,298]
];
var tdNines = [[1150,1395,'td-box-red'],[1899,720,'td-box-green'],[2648,172,'td-box-green']];

var drawTd = function () {
  var html = '', top = '';
  tdMarks.forEach(function (m) {
    var x = mainX(m[1]), y = mainY(m[2]);
    html += '<rect class="td-box" x="' + (x - 10) + '" y="' + (y - 19) + '" width="20" height="38"/>';
  });
  tdMarks.forEach(function (m) {
    html += '<text class="td-num" x="' + mainX(m[1]) + '" y="' + mainY(m[2]) + '">' + m[0] + '</text>';
  });
  // the nines sit above the round buttons
  tdNines.forEach(function (n) {
    var x = mainX(n[0]), y = mainY(n[1]);
    top += '<rect class="' + n[2] + '" x="' + (x - 10.5) + '" y="' + (y - 19.5) + '" width="21" height="39"/>';
    top += '<text class="td-num td-num-white" x="' + x + '" y="' + y + '">9</text>';
  });
  document.getElementById('td-marks').innerHTML = html;
  document.getElementById('td-top').innerHTML = top;
};

var subX = function (x) { return x / 1.3; };
var macdY = function (y) { return 1490 + y / 3; };
var kdjY = function (y) { return 1800 + y / 3; };

// bar end for each day, 680 is the zero line, 0 = nothing drawn
var macdBars = [782,765,750,722,720,697,655,654,667,667,684,672,667,690,0,672,662,688,716,711,697,710,718,755,747,752,735,760,803,830,778,717,
  0,0,0,537,487,458,427,387,347,333,315,330,370,385,430,445,468,516,560,582,592,612,615,588,585,563,560,586,592,590,633,0,737];

var drawMacd = function () {
  var red = '', green = '';
  macdBars.forEach(function (v, i) {
    if (!v) return;
    var x = (FIRST + 0.7 + STEP * i).toFixed(1);
    var d = 'M' + x + ' ' + macdY(680).toFixed(1) + 'V' + macdY(v).toFixed(1);
    if (v > 680) green += d; else red += d;
  });
  document.getElementById('macd-bars').innerHTML =
    '<path class="bar-red" d="' + red + '"/><path class="bar-green" d="' + green + '"/>';

  var dif = '36,790 60,792 83,795 107,786 130,788 154,778 177,757 200,753 224,757 247,757 270,765 294,758 317,755 340,767 364,762 388,755 411,750 435,763 458,783 481,784 505,780 528,790 552,800 575,825 598,830 622,841 645,841 668,862 692,895 715,933 738,918 762,893 785,868 808,843 832,818 856,765 880,717 903,670 926,628 950,570 973,517 997,460 1020,405 1043,370 1067,350 1090,322 1114,313 1137,292 1160,277 1184,282 1207,287 1230,287 1254,281 1277,282 1300,275 1324,252 1347,240 1371,212 1394,197 1418,197 1441,190 1465,178 1488,190 1511,220 1533,252';
  var dea = '36,740 60,753 83,762 107,767 130,771 154,773 177,768 200,766 247,763 294,762 340,761 388,760 411,759 435,762 458,766 505,770 552,783 598,800 645,817 668,830 692,848 715,862 738,872 762,875 785,873 808,867 832,853 856,832 880,805 903,775 926,745 950,712 973,675 997,632 1020,590 1043,545 1067,503 1090,465 1114,430 1137,398 1160,375 1184,358 1207,345 1230,333 1254,322 1277,315 1300,307 1324,297 1347,285 1371,268 1394,255 1418,243 1441,230 1465,220 1488,215 1511,215 1533,223';
  document.getElementById('macd-lines').innerHTML =
    linePath('l-black', poly(dif, subX, macdY)) + linePath('l-orange line-wide', poly(dea, subX, macdY));
};

var drawKdj = function () {
  var k = '36,762 60,715 83,705 107,655 130,675 154,640 177,528 200,518 224,560 247,578 270,618 294,585 317,575 340,640 364,615 388,590 411,543 435,600 458,708 481,705 505,675 528,738 552,755 575,795 598,775 622,778 645,755 668,815 692,845 715,860 738,755 762,650 785,570 808,500 832,440 856,415 880,375 903,358 926,338 950,322 973,315 997,313 1020,312 1043,320 1067,345 1090,330 1114,345 1137,330 1160,322 1184,368 1207,410 1230,385 1254,380 1277,385 1300,365 1324,342 1347,355 1371,337 1394,335 1418,355 1441,345 1465,340 1488,400 1511,465 1533,560';
  var d = '36,730 60,727 83,720 107,698 130,688 154,670 177,625 200,590 224,580 247,578 270,592 294,585 317,582 340,603 364,607 388,600 411,583 435,590 458,632 481,655 505,663 528,692 552,718 575,740 598,752 622,760 645,757 668,775 692,800 715,817 738,800 762,740 785,670 808,600 832,535 856,485 880,445 903,420 926,390 950,365 973,348 997,337 1020,332 1043,330 1067,335 1090,333 1114,335 1137,333 1160,328 1184,345 1207,365 1230,372 1254,375 1277,377 1300,370 1324,362 1347,360 1371,352 1394,350 1418,350 1441,347 1465,345 1488,367 1511,410 1533,458';
  var j = '36,820 60,700 83,675 107,570 130,640 154,572 177,340 200,378 224,525 247,578 270,662 294,570 317,552 340,715 364,635 388,575 411,463 435,620 458,858 481,805 505,705 528,840 552,845 575,908 598,822 622,817 645,733 668,875 692,940 715,947 738,650 762,460 785,345 808,238 832,197 856,210 880,192 903,213 926,215 950,225 973,240 997,262 1020,275 1043,305 1067,358 1090,320 1114,358 1137,322 1160,305 1184,410 1207,500 1230,410 1254,388 1277,398 1300,340 1324,302 1347,355 1371,307 1394,307 1418,360 1441,340 1465,323 1488,470 1511,615 1533,838';
  document.getElementById('kdj-lines').innerHTML =
    linePath('l-black', poly(k, subX, kdjY)) + linePath('l-orange', poly(d, subX, kdjY)) + linePath('l-violet', poly(j, subX, kdjY));

  var minor = '', major = '';
  for (var i = 11; i <= 64; i++) {
    var x = FIRST + STEP * i;
    if (i === 20 || i === 42 || i === 64) major += 'M' + x + ' 2118V2133';
    else minor += 'M' + x + ' 2118V2126';
  }
  document.getElementById('kdj-ticks').innerHTML =
    '<path class="tick" d="' + minor + '"/><path class="tick-major" d="' + major + '"/>';
};

drawCandles();
drawMa();
drawTd();
drawMacd();
drawKdj();
```
